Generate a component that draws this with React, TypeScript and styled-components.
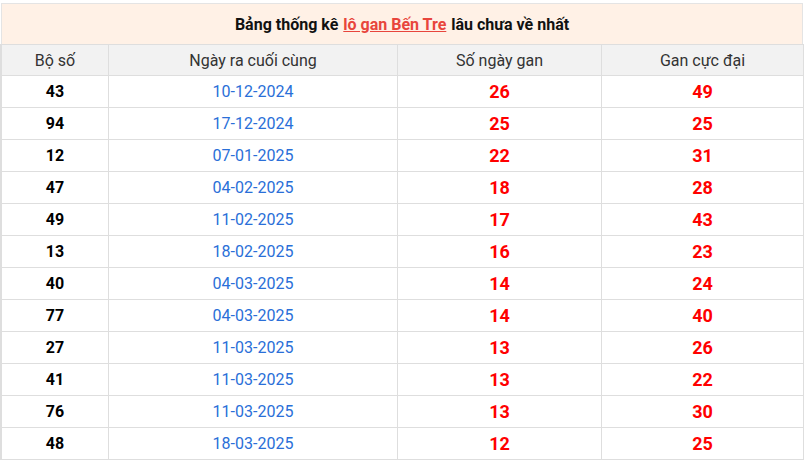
import React from 'react';
import styled, { createGlobalStyle } from 'styled-components';

const GlobalStyle = createGlobalStyle`
  html, body {
    margin: 0;
    padding: 0;
    background: #fff;
    font-family: Roboto, 'Liberation Sans', sans-serif;
  }
`;

const Wrapper = styled.div`
  width: 804px;
  padding-top: 3px;
`;

// tiêu đề bảng
const Title = styled.div`
  margin-left: 1px;
  width: 800px;
  height: 40px;
  border: 1px solid #e4e4e4;
  border-bottom: none;
  background-color: #fff1e6;
  display: flex;
  align-items: center;
  justify-content: center;
  font-size: 16px;
  font-weight: 700;
  color: #111;
`;

const TitleLink = styled.a`
  color: #e8453c;
  text-decoration: underline;
  margin: 0 5px;
`;

const Table = styled.div`
  border-top: 1px solid #dedede;
  border-left: 2px solid #dedede;
`;

interface IRow {
  head?: boolean;
}

const Row = styled.div<IRow>`
  display: grid;
  grid-template-columns: 107px 289px 204px 1fr;
  height: ${(props) => (props.head ? '30px' : '31px')};
  border-bottom: 1px solid #dedede;
  background-color: ${(props) => (props.head ? '#f2f2f2' : '#fff')};
`;

interface ICell {
  kind: 'head' | 'num' | 'date' | 'red';
}

const Cell = styled.div<ICell>`
  display: flex;
  align-items: center;
  justify-content: center;
  border-right: 1px solid #dedede;
  font-size: ${(props) => (props.kind === 'red' ? '18px' : '16px')};
  font-weight: ${(props) => (props.kind === 'num' || props.kind === 'red' ? 700 : 400)};
  color: ${(props) =>
    props.kind === 'red' ? '#ff0000' : props.kind === 'date' ? '#2a6fd8' : props.kind === 'num' ? '#000' : '#333'};
`;

const rows = [
  ['43', '10-12-2024', '26', '49'],
  ['94', '17-12-2024', '25', '25'],
  ['12', '07-01-2025', '22', '31'],
  ['47', '04-02-2025', '18', '28'],
  ['49', '11-02-2025', '17', '43'],
  ['13', '18-02-2025', '16', '23'],
  ['40', '04-03-2025', '14', '24'],
  ['77', '04-03-2025', '14', '40'],
  ['27', '11-03-2025', '13', '26'],
  ['41', '11-03-2025', '13', '22'],
  ['76', '11-03-2025', '13', '30'],
  ['48', '18-03-2025', '12', '25'],
];

function App() {
  return (
    <Wrapper>
      <GlobalStyle />
      <Title>
        Bảng thống kê
        <TitleLink href="#">lô gan Bến Tre</TitleLink>
        lâu chưa về nhất
      </Title>
      <Table>
        <Row head>
          <Cell kind="head">Bộ số</Cell>
          <Cell kind="head">Ngày ra cuối cùng</Cell>
          <Cell kind="head">Số ngày gan</Cell>
          <Cell kind="head">Gan cực đại</Cell>
        </Row>
        {rows.map((r) => (
          <Row key={r[0]}>
            <Cell kind="num">{r[0]}</Cell>
            <Cell kind="date">{r[1]}</Cell>
            <Cell kind="red">{r[2]}</Cell>
            <Cell kind="red">{r[3]}</Cell>
          </Row>
        ))}
      </Table>
    </Wrapper>
  );
}

export default App;
